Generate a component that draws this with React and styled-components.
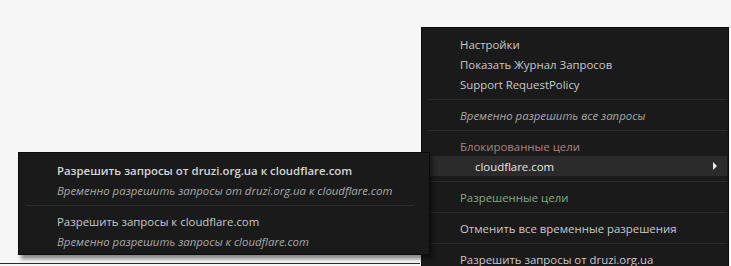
import React from "react";
import styled, { createGlobalStyle } from "styled-components";

const GlobalStyle = createGlobalStyle`
  html, body {
    margin: 0;
    padding: 0;
    background: #f6f6f6;
    overflow: hidden;
  }
`;

const Page = styled.div`
  position: relative;
  width: 731px;
  height: 266px;
  overflow: hidden;
  display: flex;
  flex-direction: column;
  justify-content: flex-end;
  font-family: "Open Sans", "Noto Sans", sans-serif;
  font-size: 11.4px;
`;

const BottomRule = styled.div`
  width: 420px;
  height: 1px;
  background: #2a2a2a;
  margin-bottom: 2px;
`;

const Menu = styled.div`
  position: absolute;
  left: 421px;
  top: 27px;
  width: 308px;
  height: 250px;
  background: #1a1a1a;
  border: 1px solid #0b0b0b;
  border-bottom: none;
  padding: 6px 1px 0 0;
  box-sizing: border-box;
`;

const SubMenu = styled.div`
  position: absolute;
  left: 18px;
  top: 152px;
  width: 412px;
  background: #1a1a1a;
  border: 1px solid #0b0b0b;
  box-sizing: border-box;
  padding: 7px 0 3px;
  box-shadow: 3px 4px 4px rgba(0, 0, 0, 0.45);
  z-index: 2;
`;

const Item = styled.div`
  height: 20px;
  display: flex;
  align-items: center;
  justify-content: space-between;
  padding: 0 10px 0 ${(p) => (p.$indent ? 53 : 38)}px;
  color: ${(p) => p.$color || "#c9c9c9"};
  font-style: ${(p) => (p.$italic ? "italic" : "normal")};
  font-weight: ${(p) => (p.$bold ? 600 : 400)};
  background: ${(p) => (p.$active ? "#2b2b2b" : "transparent")};
  white-space: nowrap;
`;

const Separator = styled.div`
  height: 1px;
  background: #2c2c2c;
  margin: 5px ${(p) => p.$right || 0}px 5px ${(p) => p.$left || 5}px;
`;

const Arrow = styled.span`
  width: 0;
  height: 0;
  border-top: 4px solid transparent;
  border-bottom: 4px solid transparent;
  border-left: 4px solid #f0f0f0;
`;

export default function App() {
  return (
    <>
      <GlobalStyle />
      <Page>
        <BottomRule />
        <Menu>
          <Item>Настройки</Item>
          <Item>Показать Журнал Запросов</Item>
          <Item>Support RequestPolicy</Item>
          <Separator />
          <Item $italic $color="#a9a9a9">Временно разрешить все запросы</Item>
          <Separator />
          <Item $color="#a88484">Блокированные цели</Item>
          <Item $indent $active $color="#e6e6e6">
            cloudflare.com
            <Arrow />
          </Item>
          <Separator />
          <Item $color="#7fae7f">Разрешенные цели</Item>
          <Separator />
          <Item>Отменить все временные разрешения</Item>
          <Separator />
          <Item>Разрешить запросы от druzi.org.ua</Item>
        </Menu>
        <SubMenu>
          <Item $bold $color="#d6d6d6">Разрешить запросы от druzi.org.ua к cloudflare.com</Item>
          <Item $italic $color="#a9a9a9">Временно разрешить запросы от druzi.org.ua к cloudflare.com</Item>
          <Separator $left={7} $right={15} />
          <Item>Разрешить запросы к cloudflare.com</Item>
          <Item $italic $color="#a9a9a9">Временно разрешить запросы к cloudflare.com</Item>
        </SubMenu>
      </Page>
    </>
  );
}
